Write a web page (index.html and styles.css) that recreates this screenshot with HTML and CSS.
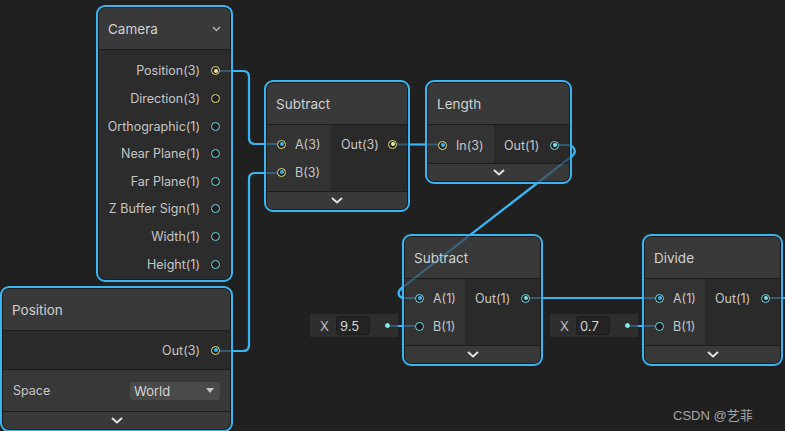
FILE: index.html
```html
<!DOCTYPE html>
<html>
<head>
<meta charset="utf-8">
<link rel="stylesheet" href="styles.css">
</head>
<body>
<div class="canvas">
  <svg class="wires" width="785" height="431" viewBox="0 0 785 431">
    <g fill="none" stroke="#3ab4f2" stroke-width="2.2" stroke-linecap="round">
      <path d="M216 71 H243 Q249 71 249 77 V138 Q249 144 255 144 H281"/>
      <path d="M216 351 H243 Q249 351 249 345 V179 Q249 173 255 173 H281"/>
      <path d="M393 144.5 H442"/>
      <path d="M554 145 H566 C576 145 577 153 571 157 L403 287 C396 292 398 298 405 298 H417"/>
      <path d="M526 298 H657"/>
      <path d="M766 298 H790"/>
      <path d="M387 326 H417" stroke-width="1.8"/>
      <path d="M627 326 H657" stroke-width="1.8"/>
    </g>
  </svg>

  <div class="node camera">
    <div class="inner">
      <div class="head"><span>Camera</span>
        <svg class="mini-chev" width="9" height="6" viewBox="0 0 9 6"><polyline points="1,1 4.5,4.5 8,1" fill="none" stroke="#b4b4b4" stroke-width="1.4"/></svg>
      </div>
      <div class="outs">
        <div class="row"><span>Position(3)</span><i class="port y fy"></i></div>
        <div class="row"><span>Direction(3)</span><i class="port y"></i></div>
        <div class="row"><span>Orthographic(1)</span><i class="port c"></i></div>
        <div class="row"><span>Near Plane(1)</span><i class="port c"></i></div>
        <div class="row"><span>Far Plane(1)</span><i class="port c"></i></div>
        <div class="row"><span>Z Buffer Sign(1)</span><i class="port c"></i></div>
        <div class="row"><span>Width(1)</span><i class="port c"></i></div>
        <div class="row"><span>Height(1)</span><i class="port c"></i></div>
      </div>
    </div>
  </div>

  <div class="node sub1">
    <div class="inner">
      <div class="head"><span>Subtract</span></div>
      <div class="body two">
        <div class="col-in">
          <div class="row"><i class="port y fb"></i><span>A(3)</span></div>
          <div class="row"><i class="port y fb"></i><span>B(3)</span></div>
        </div>
        <div class="col-out">
          <div class="row"><span>Out(3)</span><i class="port y fy"></i></div>
        </div>
      </div>
      <div class="foot"><svg width="12" height="7" viewBox="0 0 12 7"><polyline points="1,1 6,5.5 11,1" fill="none" stroke="#e2e2e2" stroke-width="2"/></svg></div>
    </div>
  </div>

  <div class="node length">
    <div class="inner">
      <div class="head"><span>Length</span></div>
      <div class="body two short">
        <div class="col-in">
          <div class="row"><i class="port y fb"></i><span>In(3)</span></div>
        </div>
        <div class="col-out">
          <div class="row"><span>Out(1)</span><i class="port c fc"></i></div>
        </div>
      </div>
      <div class="foot"><svg width="12" height="7" viewBox="0 0 12 7"><polyline points="1,1 6,5.5 11,1" fill="none" stroke="#e2e2e2" stroke-width="2"/></svg></div>
    </div>
  </div>

  <div class="node sub2">
    <div class="inner">
      <div class="head"><span>Subtract</span></div>
      <div class="body two">
        <div class="col-in">
          <div class="row"><i class="port c fb"></i><span>A(1)</span></div>
          <div class="row"><i class="port c fd"></i><span>B(1)</span></div>
        </div>
        <div class="col-out">
          <div class="row"><span>Out(1)</span><i class="port c fc"></i></div>
        </div>
      </div>
      <div class="foot"><svg width="12" height="7" viewBox="0 0 12 7"><polyline points="1,1 6,5.5 11,1" fill="none" stroke="#e2e2e2" stroke-width="2"/></svg></div>
    </div>
  </div>

  <div class="node divide">
    <div class="inner">
      <div class="head"><span>Divide</span></div>
      <div class="body two">
        <div class="col-in">
          <div class="row"><i class="port c fb"></i><span>A(1)</span></div>
          <div class="row"><i class="port c fd"></i><span>B(1)</span></div>
        </div>
        <div class="col-out">
          <div class="row"><span>Out(1)</span><i class="port c fc"></i></div>
        </div>
      </div>
      <div class="foot"><svg width="12" height="7" viewBox="0 0 12 7"><polyline points="1,1 6,5.5 11,1" fill="none" stroke="#e2e2e2" stroke-width="2"/></svg></div>
    </div>
  </div>

  <div class="node position">
    <div class="inner">
      <div class="head"><span>Position</span></div>
      <div class="out-row"><span>Out(3)</span><i class="port y fb"></i></div>
      <div class="space-row"><span>Space</span>
        <div class="dropdown"><span>World</span><i class="tri"></i></div>
      </div>
      <div class="foot"><svg width="12" height="7" viewBox="0 0 12 7"><polyline points="1,1 6,5.5 11,1" fill="none" stroke="#e2e2e2" stroke-width="2"/></svg></div>
    </div>
  </div>

  <div class="xfield xf1"><span class="xl">X</span><span class="xin">9.5</span><i class="xdot"></i></div>
  <div class="xfield xf2"><span class="xl">X</span><span class="xin">0.7</span><i class="xdot"></i></div>

  <svg class="wires over" width="785" height="431" viewBox="0 0 785 431">
    <g fill="none" stroke="#3ab4f2" stroke-width="2.2" stroke-linecap="round">
      <path d="M216 71 H243 Q249 71 249 77 V138 Q249 144 255 144 H281"/>
      <path d="M216 351 H243 Q249 351 249 345 V179 Q249 173 255 173 H281"/>
      <path d="M393 144.5 H442"/>
      <path d="M554 145 H566 C576 145 577 153 571 157 L403 287 C396 292 398 298 405 298 H417"/>
      <path d="M526 298 H657"/>
      <path d="M766 298 H790"/>
      <path d="M387 326 H417" stroke-width="1.8"/>
      <path d="M627 326 H657" stroke-width="1.8"/>
    </g>
  </svg>

  <div class="watermark">CSDN @艺菲</div>
</div>
</body>
</html>
```

FILE: styles.css
```css
html, body {
  margin: 0;
  padding: 0;
  background: #202020;
}

.canvas {
  position: relative;
  width: 785px;
  height: 431px;
  overflow: hidden;
  background: #202020;
  font-family: Inter, "Noto Sans", "Liberation Sans", sans-serif;
  color: #c6c6c6;
  font-size: 12.5px;
}

.wires {
  position: absolute;
  left: 0;
  top: 0;
  pointer-events: none;
}

.wires.over {
  z-index: 2;
  opacity: 0.35;
}

.node {
  position: absolute;
  box-sizing: border-box;
  border: 2px solid #3ab4f2;
  border-radius: 9px;
  padding: 1px;
  background: #1c1c1c;
}

.camera { left: 96px; top: 5px; width: 137px; }
.sub1 { left: 264px; top: 80px; width: 146px; }
.length { left: 425px; top: 80px; width: 147px; }
.sub2 { left: 402px; top: 234px; width: 141px; }
.divide { left: 642px; top: 234px; width: 141px; }
.position { left: 0; top: 286px; width: 233px; }

.inner {
  display: flex;
  flex-direction: column;
  gap: 1px;
  border-radius: 6px;
  overflow: hidden;
}

.head {
  height: 41px;
  flex: none;
  background: #393939;
  display: flex;
  align-items: center;
  justify-content: space-between;
  padding: 0 10px 0 9px;
  font-size: 13.5px;
  color: #d0d0d0;
}

.mini-chev { margin-right: -1px; margin-top: 1px; }

.outs {
  background: #2c2c2c;
  padding: 7.2px 0 1px 0;
  display: flex;
  flex-direction: column;
}

.outs .row {
  height: 27.6px;
  display: flex;
  align-items: center;
  justify-content: flex-end;
  gap: 11px;
  padding-right: 10px;
}

.body.two {
  display: grid;
  grid-template-columns: 64px 1fr;
  height: 66px;
}

.length .body.two { grid-template-columns: 66px 1fr; height: 38px; }
.sub2 .body.two, .divide .body.two { grid-template-columns: 60px 1fr; }

.col-in {
  background: #333333;
  padding-top: 5px;
}

.col-out {
  background: #2a2a2a;
  padding-top: 5px;
}

.length .col-in, .length .col-out { padding-top: 6px; }

.col-in .row {
  height: 28px;
  display: flex;
  align-items: center;
  gap: 9px;
  padding-left: 10px;
}

.col-out .row {
  height: 28px;
  display: flex;
  align-items: center;
  justify-content: space-between;
  padding: 0 10px;
}

.foot {
  height: 17px;
  flex: none;
  background: #393939;
  display: flex;
  align-items: center;
  justify-content: center;
}

.port {
  position: relative;
  z-index: 3;
  flex: none;
  box-sizing: border-box;
  width: 9px;
  height: 9px;
  border-radius: 50%;
  border: 1.5px solid #e2e07c;
  background: #1f1f1f;
  display: flex;
  align-items: center;
  justify-content: center;
}

.port.c { border-color: #72d6da; }
.port.y { border-color: #e2e07c; }

.port.fy::after, .port.fb::after, .port.fc::after {
  content: "";
  width: 4px;
  height: 4px;
  border-radius: 50%;
}

.port.fy::after { background: #f0eea0; }
.port.fb::after { background: #3ab4f2; }
.port.fc::after { background: #86e2e4; }
.port.fd { background: #1a1a1a; }

.out-row {
  height: 38px;
  background: #2a2a2a;
  display: flex;
  align-items: center;
  justify-content: flex-end;
  gap: 11px;
  padding-right: 10px;
}

.space-row {
  height: 41px;
  background: #383838;
  display: flex;
  align-items: center;
  justify-content: space-between;
  padding: 0 10px;
}

.dropdown {
  box-sizing: border-box;
  width: 90px;
  height: 18px;
  background: #4a4a4a;
  border-radius: 3px;
  display: flex;
  align-items: center;
  justify-content: space-between;
  padding: 0 6px 0 4px;
  color: #d6d6d6;
  font-size: 13px;
}

.tri {
  width: 0;
  height: 0;
  border-left: 4.5px solid transparent;
  border-right: 4.5px solid transparent;
  border-top: 5px solid #c4c4c4;
}

.xfield {
  position: absolute;
  box-sizing: border-box;
  top: 314px;
  width: 88px;
  height: 23px;
  background: #2e2e2e;
  display: flex;
  align-items: center;
  padding-left: 10px;
  font-size: 13px;
}

.xf1 { left: 310px; }
.xf2 { left: 550px; }

.xl {
  color: #bdbdbd;
  width: 16px;
}

.xin {
  box-sizing: border-box;
  width: 34px;
  height: 19px;
  background: #242424;
  border: 1px solid #1c1c1c;
  border-radius: 3px;
  padding-left: 3px;
  display: flex;
  align-items: center;
  color: #d2d2d2;
  font-size: 13px;
}

.xdot {
  position: relative;
  z-index: 3;
  box-sizing: border-box;
  margin-left: 14px;
  width: 7px;
  height: 7px;
  border-radius: 50%;
  background: #84e4e7;
  border: 1.5px solid #1a1a1a;
}

.watermark {
  position: absolute;
  left: 673px;
  top: 405px;
  font-family: "Liberation Sans", "Noto Sans CJK SC", sans-serif;
  font-size: 13px;
  color: #a4a4a4;
}
```
